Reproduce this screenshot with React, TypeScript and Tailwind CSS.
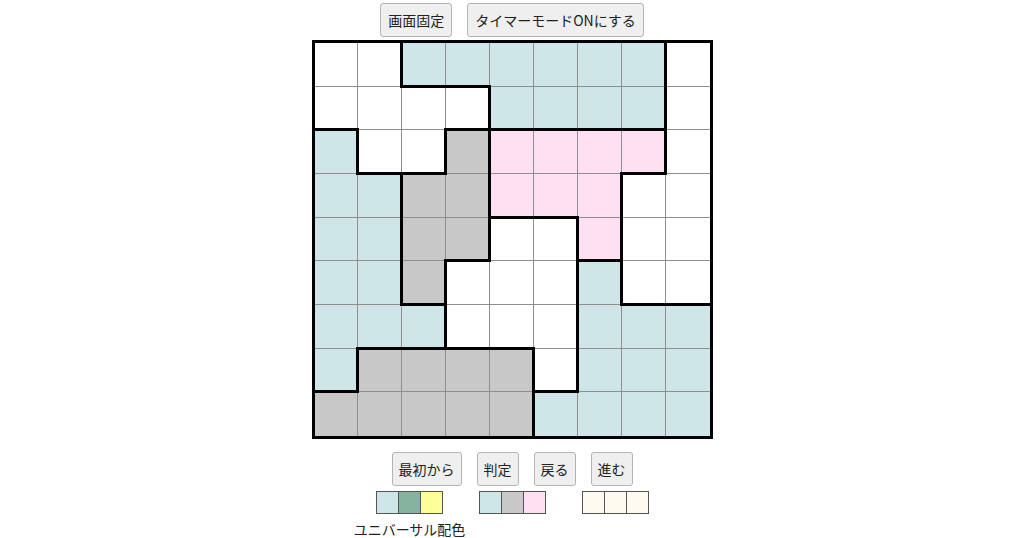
import React from "react";

// W = white, B = blue, G = gray, P = pink
const board = [
  "WWBBBBBBW",
  "WWWWBBBBW",
  "BWWGPPPPW",
  "BBGGPPPWW",
  "BBGGWWPWW",
  "BBGWWWBWW",
  "BBBWWWBBB",
  "BGGGGWBBB",
  "GGGGGBBBB",
];

const cellColor: Record<string, string> = {
  W: "bg-white",
  B: "bg-[#cfe6e8]",
  G: "bg-[#c8c8c8]",
  P: "bg-[#ffe0f2]",
};

function Cell({ r, c }: { r: number; c: number }) {
  const v = board[r][c];
  const right = c < 8 && board[r][c + 1] !== v;
  const bottom = r < 8 && board[r + 1][c] !== v;
  return (
    <div
      className={`relative box-border ${cellColor[v]} ${c < 8 ? "border-r border-[#8e8e8e]" : ""} ${
        r < 8 ? "border-b border-b-[#8e8e8e]" : ""
      }`}
    >
      {right && <span className="absolute top-[-2px] bottom-[-2px] right-[-2px] w-[3px] bg-black z-10" />}
      {bottom && <span className="absolute left-[-2px] right-[-2px] bottom-[-2px] h-[3px] bg-black z-10" />}
    </div>
  );
}

function Btn({ children, pad = "px-[7px]" }: { children: React.ReactNode; pad?: string }) {
  return (
    <button
      type="button"
      className={`h-[34px] ${pad} rounded-[3px] border border-[#b4b4b4] bg-[#efefef] text-[14px] text-[#222] leading-none`}
    >
      {children}
    </button>
  );
}

function Swatches({ colors }: { colors: string[] }) {
  return (
    <div className="flex border border-[#555] bg-[#555] gap-px">
      {colors.map((col, i) => (
        <div key={i} className={`w-[21px] h-[21px] ${col}`} />
      ))}
    </div>
  );
}

export default function App() {
  return (
    <div className="w-[1024px] h-[538px] bg-white flex flex-col items-center pt-[3px] font-['Noto_Sans_CJK_JP',sans-serif] overflow-hidden">
      {/* top controls */}
      <div className="flex gap-[15px]">
        <Btn>画面固定</Btn>
        <Btn>タイマーモードONにする</Btn>
      </div>

      {/* puzzle board */}
      <div className="mt-[3px] w-[401px] h-[400px] box-border border-[3px] border-black grid grid-cols-9 grid-rows-9">
        {board.map((row, r) => row.split("").map((_, c) => <Cell key={`${r}-${c}`} r={r} c={c} />))}
      </div>

      {/* bottom controls */}
      <div className="mt-[13px] flex gap-[15px]">
        <Btn pad="px-[6px]">最初から</Btn>
        <Btn pad="px-[6px]">判定</Btn>
        <Btn pad="px-[6px]">戻る</Btn>
        <Btn pad="px-[6px]">進む</Btn>
      </div>

      {/* colour palettes */}
      <div className="mt-[5px] flex items-start gap-[36px] pl-[1px]">
        <div className="w-[67px] flex flex-col items-center">
          <Swatches colors={["bg-[#cfe6e8]", "bg-[#86b39d]", "bg-[#ffff99]"]} />
          <span className="mt-[6px] whitespace-nowrap text-[14px] text-[#222] leading-[18px]">ユニバーサル配色</span>
        </div>
        <Swatches colors={["bg-[#cfe6e8]", "bg-[#c8c8c8]", "bg-[#ffe0f2]"]} />
        <Swatches colors={["bg-[#fffaf0]", "bg-[#fffaf0]", "bg-[#fffaf0]"]} />
      </div>
    </div>
  );
}
